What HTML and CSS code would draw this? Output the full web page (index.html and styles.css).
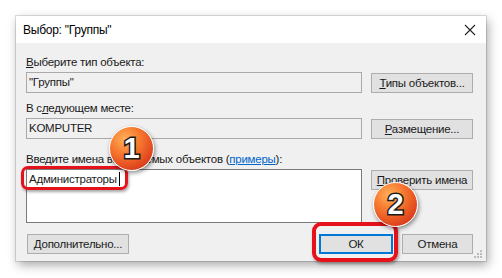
FILE: index.html
```html
<!DOCTYPE html>
<html lang="ru">
<head>
<meta charset="utf-8">
<link rel="stylesheet" href="styles.css">
</head>
<body>
<div class="page">
  <div class="dialog">
    <div class="titlebar">
      <span class="title">Выбор: "Группы"</span>
      <svg class="close" width="12" height="12" viewBox="0 0 12 12"><path d="M1 1 L11 11 M11 1 L1 11" stroke="#222" stroke-width="1.1" fill="none"/></svg>
    </div>
    <div class="content">
      <div class="label label-first"><u>В</u>ыберите тип объекта:</div>
      <div class="row">
        <div class="field readonly">"Группы"</div>
        <div class="btn"><u>Т</u>ипы объектов...</div>
      </div>
      <div class="label">В с<u>л</u>едующем месте:</div>
      <div class="row">
        <div class="field readonly">KOMPUTER</div>
        <div class="btn"><u>Р</u>азмещение...</div>
      </div>
      <div class="label label-third">Введите имена выбираемых объектов (<a class="link">примеры</a>):</div>
      <div class="row row-area">
        <div class="field area">Администраторы<span class="caret"></span></div>
        <div class="btn"><u>П</u>роверить имена</div>
      </div>
      <div class="footer">
        <div class="btn btn-wide"><u>Д</u>ополнительно...</div>
        <div class="spacer"></div>
        <div class="btn btn-default">ОК</div>
        <div class="btn btn-cancel">Отмена</div>
      </div>
    </div>
    <svg class="grip" width="8" height="8" viewBox="0 0 8 8">
      <rect x="6" y="0" width="2" height="2" fill="#bcbcbc"/>
      <rect x="3" y="3" width="2" height="2" fill="#bcbcbc"/>
      <rect x="6" y="3" width="2" height="2" fill="#bcbcbc"/>
      <rect x="0" y="6" width="2" height="2" fill="#bcbcbc"/>
      <rect x="3" y="6" width="2" height="2" fill="#bcbcbc"/>
      <rect x="6" y="6" width="2" height="2" fill="#bcbcbc"/>
    </svg>
  </div>
  <div class="mark mark-one"></div>
  <div class="mark mark-two"></div>
  <div class="badge badge-one"><span>1</span></div>
  <div class="badge badge-two"><span>2</span></div>
</div>
</body>
</html>
```
FILE: styles.css
```css
html, body {
  margin: 0;
  padding: 0;
  background: #ffffff;
}
.page {
  position: relative;
  width: 502px;
  height: 278px;
  padding: 16px 0 0 16px;
  box-sizing: border-box;
  font-family: "Liberation Sans", Arial, sans-serif;
  font-size: 11.5px;
  letter-spacing: -0.25px;
  color: #1a1a1a;
}
.dialog {
  position: relative;
  width: 470px;
  height: 245px;
  background: #f0f0f0;
  box-shadow: 0 0 0 1px rgba(0,0,0,0.12), 2px 4px 10px rgba(0,0,0,0.35);
  display: flex;
  flex-direction: column;
}
.titlebar {
  height: 27px;
  background: #ffffff;
  display: flex;
  align-items: center;
  justify-content: space-between;
  padding: 0 10px 0 7px;
  flex: none;
}
.title {
  font-size: 12px;
  color: #000;
}
.close {
  display: block;
}
.content {
  display: flex;
  flex-direction: column;
  padding: 0 13px 0 10px;
}
.label {
  height: 16px;
  line-height: 16px;
  margin-top: 7px;
  white-space: nowrap;
}
.label-first { margin-top: 11px; }
.label-third { margin-top: 12px; }
.link {
  color: #0066cc;
  text-decoration: underline;
}
.row {
  display: flex;
  gap: 9px;
  margin-top: 2px;
  align-items: flex-start;
}
.field {
  width: 336px;
  height: 21px;
  box-sizing: border-box;
  border: 1px solid #a9a9a9;
  line-height: 19px;
  padding: 0 2px;
  flex: none;
}
.readonly {
  background: #f0f0f0;
}
.area {
  height: 54px;
  background: #ffffff;
  border-color: #7a7a7a;
  padding-top: 0;
}
.caret {
  display: inline-block;
  width: 1px;
  height: 14px;
  background: #000;
  vertical-align: -3px;
  margin-left: 2px;
}
.btn {
  width: 102px;
  height: 20px;
  box-sizing: border-box;
  background: #e1e1e1;
  border: 1px solid #adadad;
  text-align: center;
  line-height: 18px;
  margin-top: 1px;
  white-space: nowrap;
  flex: none;
}
.row-area .btn { margin-top: 1px; }
.footer {
  display: flex;
  align-items: center;
  margin-top: 11px;
  padding-left: 1px;
}
.spacer { flex: 1; }
.btn-wide { width: 102px; margin-top: 0; }
.btn-default {
  width: 74px;
  border: 2px solid #0078d7;
  line-height: 16px;
  margin-top: 0;
}
.btn-cancel {
  width: 71px;
  margin-left: 9px;
  margin-top: 0;
}
.grip {
  position: absolute;
  right: 4px;
  bottom: 3px;
}
.mark {
  position: absolute;
  box-sizing: border-box;
  border: 3px solid #e5121c;
  border-radius: 7px;
  box-shadow: 1px 2px 3px rgba(0,0,0,0.35);
}
.mark-one {
  left: 21px;
  top: 166px;
  width: 107px;
  height: 24px;
}
.mark-two {
  left: 312px;
  top: 222px;
  width: 86px;
  height: 40px;
  border-width: 4px;
  border-radius: 9px;
}
.badge {
  position: absolute;
  width: 45px;
  height: 45px;
  box-sizing: border-box;
  border-radius: 50%;
  border: 1.5px solid #ffffff;
  background: radial-gradient(circle at 35% 28%, #ffb15a 0%, #f77a30 35%, #e2481f 70%, #b92b14 100%);
  box-shadow: 1px 2px 4px rgba(0,0,0,0.45);
  display: flex;
  align-items: center;
  justify-content: center;
}
.badge span {
  font-family: "Liberation Sans", Arial, sans-serif;
  font-weight: bold;
  font-size: 29px;
  letter-spacing: 0;
  line-height: 1;
  color: #ffffff;
  -webkit-text-stroke: 3px #1a1a1a;
  paint-order: stroke fill;
}
.badge-one {
  left: 109px;
  top: 126px;
}
.badge-two {
  left: 373px;
  top: 182px;
}
```
